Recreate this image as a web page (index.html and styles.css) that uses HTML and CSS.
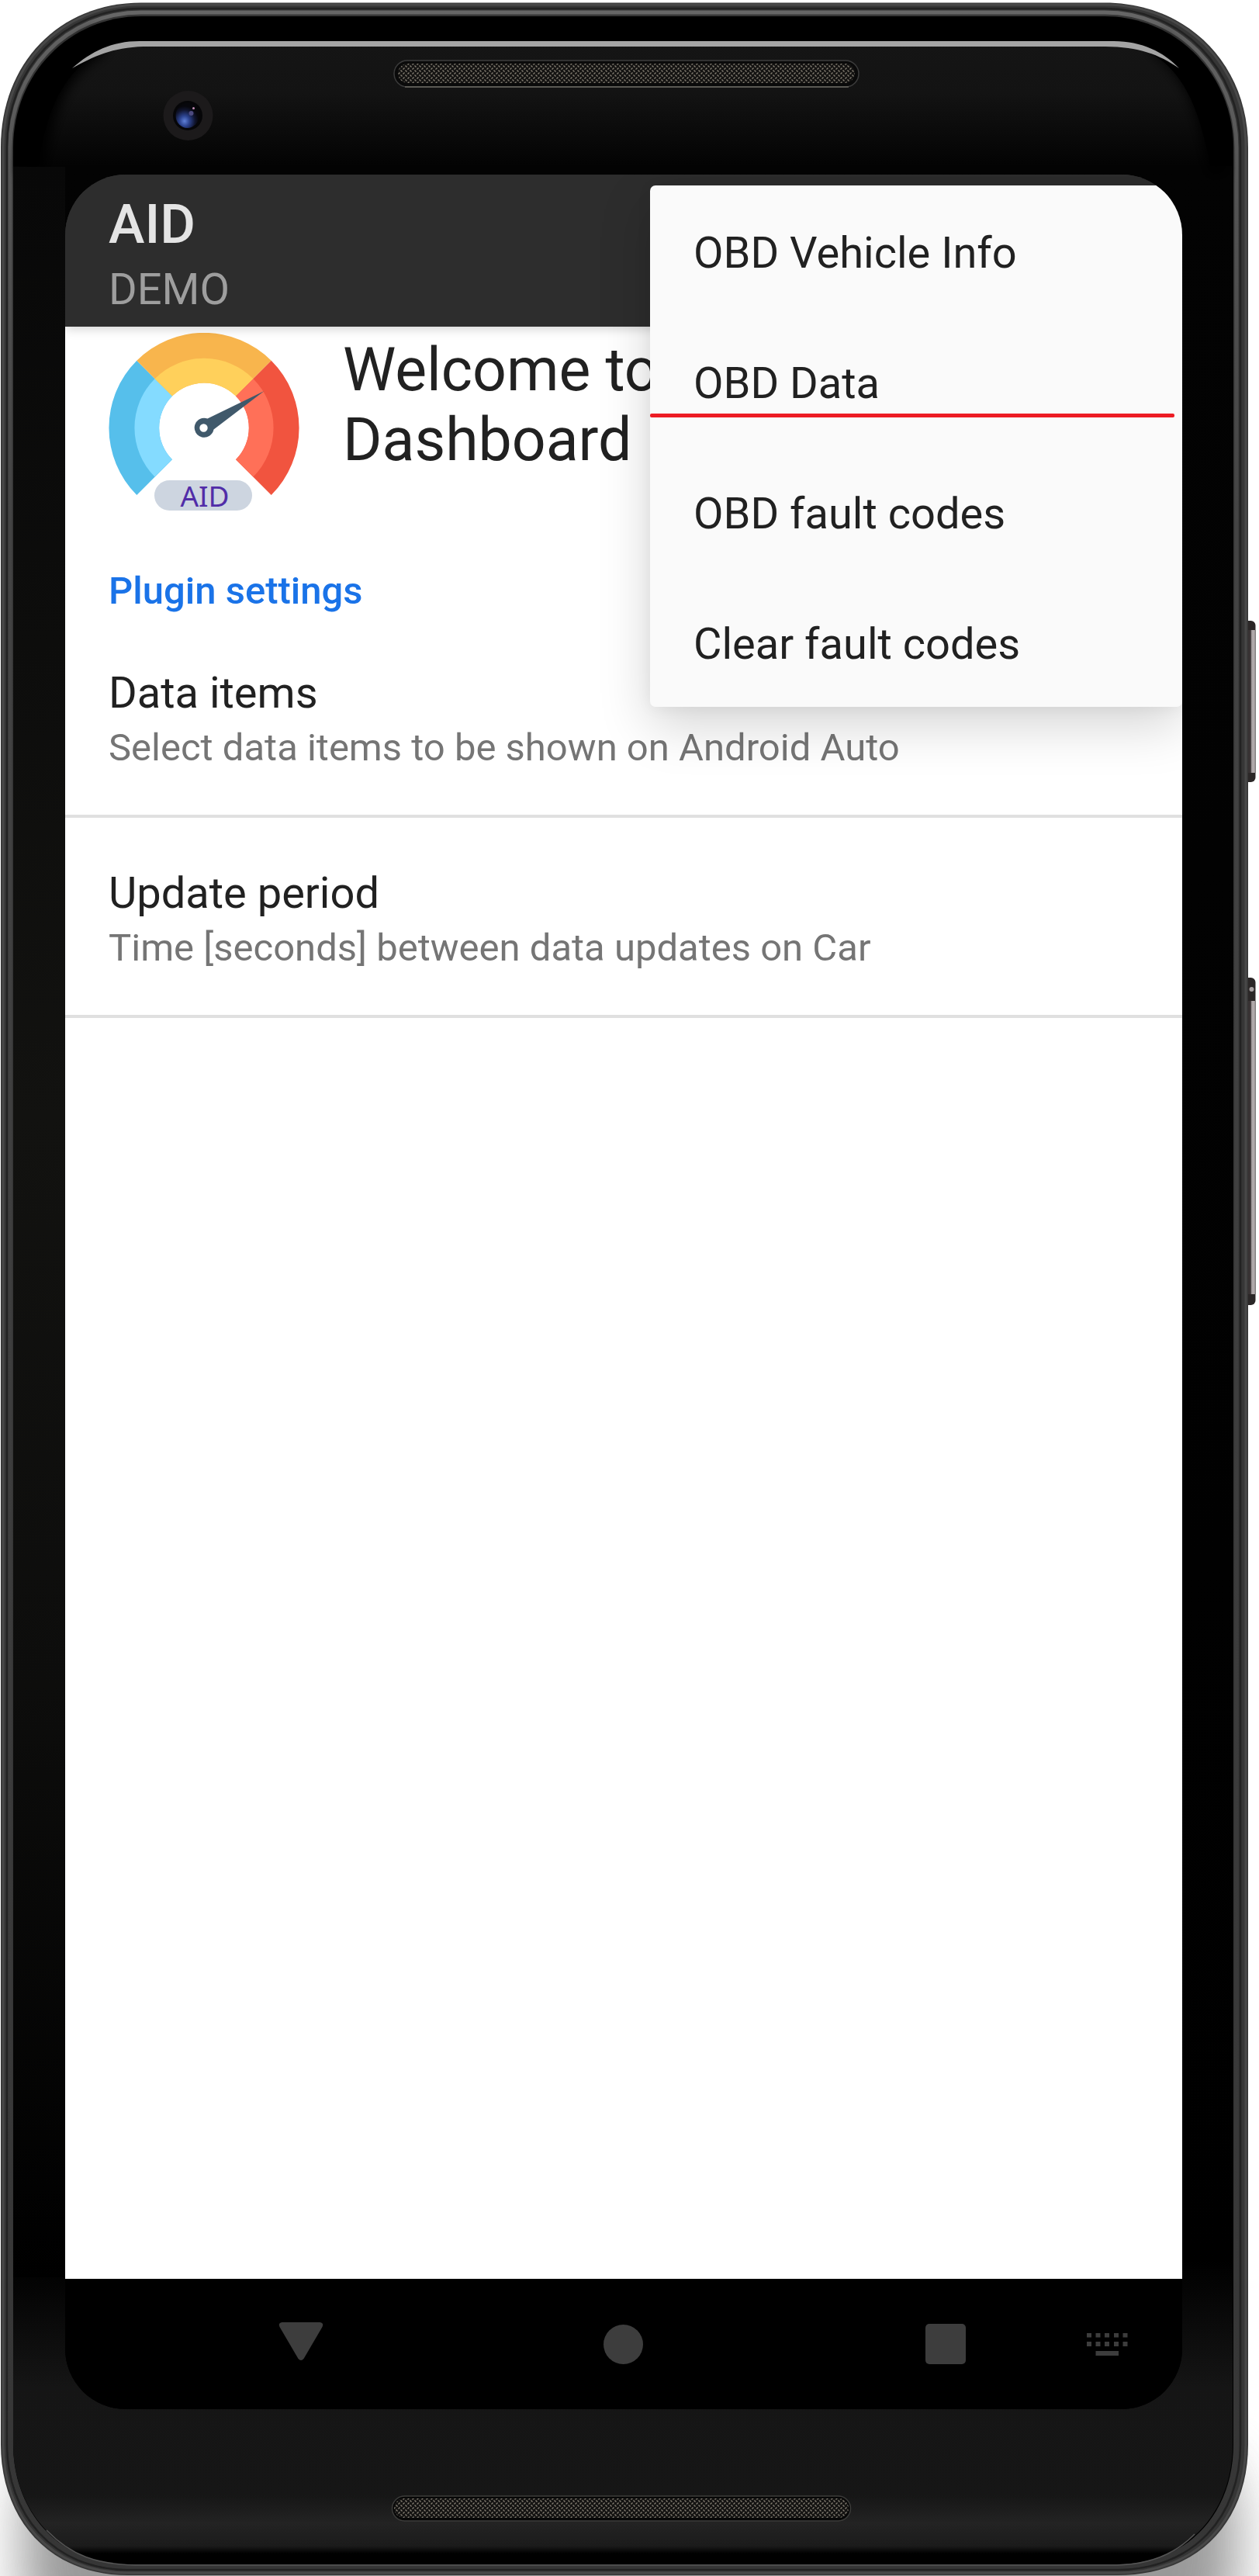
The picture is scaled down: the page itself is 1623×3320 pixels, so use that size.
FILE: index.html
```
<!DOCTYPE html>
<html lang="en">
<head>
<meta charset="utf-8">
<title>AID</title>
<link rel="stylesheet" href="styles.css">
</head>
<body>
<div class="stage">
  <svg class="device" width="1623" height="3320" viewBox="0 0 1623 3320" aria-hidden="true">
    <defs>
      <filter id="soft" x="-20%" y="-50%" width="140%" height="200%"><feGaussianBlur stdDeviation="34"/></filter>
      <filter id="blur8" x="-30%" y="-30%" width="160%" height="160%"><feGaussianBlur stdDeviation="8"/></filter>
      <linearGradient id="face" x1="0" y1="0" x2="0" y2="1">
        <stop offset="0" stop-color="#151515"/>
        <stop offset="0.02" stop-color="#131313"/>
        <stop offset="0.049" stop-color="#030303"/>
        <stop offset="0.88" stop-color="#000"/>
        <stop offset="0.93" stop-color="#151515"/>
        <stop offset="0.973" stop-color="#161616"/>
        <stop offset="0.984" stop-color="#232323"/>
        <stop offset="0.993" stop-color="#1b1b1b"/>
        <stop offset="0.996" stop-color="#000"/>
        <stop offset="1" stop-color="#000"/>
      </linearGradient>
      <linearGradient id="leftEdge" x1="0" y1="0" x2="0" y2="1">
        <stop offset="0" stop-color="#080808"/>
        <stop offset="0.45" stop-color="#121210"/>
        <stop offset="0.72" stop-color="#0d0d0c"/>
        <stop offset="1" stop-color="#000"/>
      </linearGradient>
      <linearGradient id="rim" x1="0" y1="0" x2="0" y2="1">
        <stop offset="0" stop-color="#666"/>
        <stop offset="0.06" stop-color="#555"/>
        <stop offset="0.2" stop-color="#444"/>
        <stop offset="1" stop-color="#363636"/>
      </linearGradient>
      <linearGradient id="key" x1="0" y1="0" x2="1" y2="0">
        <stop offset="0" stop-color="#2b2828"/>
        <stop offset="0.66" stop-color="#3b3536"/>
        <stop offset="0.74" stop-color="#aaa3a4"/>
        <stop offset="0.92" stop-color="#b4adae"/>
        <stop offset="1" stop-color="#6c6667"/>
      </linearGradient>
      <radialGradient id="lens" cx="0.38" cy="0.72" r="0.6">
        <stop offset="0" stop-color="#5f80d8"/>
        <stop offset="0.35" stop-color="#2c438f"/>
        <stop offset="0.75" stop-color="#10142d"/>
        <stop offset="1" stop-color="#07070c"/>
      </radialGradient>
      <pattern id="mesh" width="6" height="6" patternUnits="userSpaceOnUse">
        <rect width="6" height="6" fill="#141312"/>
        <path d="M0.5 0.5l2 2M3.5 5.5l2-2" stroke="#857f73" stroke-width="1.400"/>
      </pattern>
    </defs>
    <rect x="30" y="3150" width="1563" height="260" rx="90" fill="#777" opacity="0.75" filter="url(#soft)"/>
    <rect x="1600" y="800" width="18.500" height="208" rx="6" fill="#2b2727"/>
    <rect x="1600" y="812" width="18.500" height="184" fill="url(#key)"/>
    <rect x="1600" y="1260" width="18.500" height="422" rx="6" fill="#2b2727"/>
    <rect x="1600" y="1290" width="18.500" height="378" fill="url(#key)"/>
    <circle cx="1613.500" cy="1275" r="3" fill="#a8a1a2"/>
    <path d="M182 3.500H1424C1530 3.500 1609 82 1609 190V3150C1609 3250 1545 3319 1440 3319H165C62 3319 1 3245 1 3150V190C1 82 76 3.500 182 3.500Z" fill="#363636"/>
    <path d="M182 6H1424C1528 6 1606 84 1606 190V3150C1606 3248 1543 3316 1440 3316H165C64 3316 4 3243 4 3150V190C4 84 78 6 182 6Z" fill="none" stroke="#484848" stroke-width="3"/>
    <path d="M182 11H1424C1522 11 1599 88 1599 190V3150C1599 3244 1538 3312 1440 3312H165C68 3312 9 3240 9 3150V190C9 88 82 11 182 11Z" fill="none" stroke="#222" stroke-width="2.500"/>
    <path d="M182 16H1424C1518 16 1594 92 1594 190V3150C1594 3242 1534 3308 1440 3308H165C72 3308 13 3238 13 3150V190C13 92 86 16 182 16Z" fill="none" stroke="url(#rim)" stroke-width="5"/>
    <path d="M182 21H1424C1515 21 1590 95 1590 190V3150C1590 3240 1530 3305 1440 3305H165C75 3305 17 3236 17 3150V190C17 95 90 21 182 21Z" fill="#000"/>
    <path d="M182 55H1424C1496 57 1539 95 1560 214H1589V3150C1589 3239 1529 3304 1440 3304H165C76 3304 17 3235 17 3150V214H50C64 100 115 58 182 55Z" fill="url(#face)"/>
    <path d="M40 225C48 130 80 78 130 52" fill="none" stroke="#000" stroke-width="34" filter="url(#blur8)"/>
    <path d="M1569 225C1561 130 1535 88 1490 52" fill="none" stroke="#000" stroke-width="26" filter="url(#blur8)"/>
    <rect x="17" y="215" width="67" height="2720" fill="url(#leftEdge)"/>
    <path d="M93 88C118 66 144 53 180 53H1436C1472 53 1500 67 1520 88C1494 70 1468 60.500 1425 60H185C145 61 120 73 93 88Z" fill="#a4a4a4"/>
    <path d="M60 3261C92 3294 125 3305 175 3306H1440C1482 3305 1515 3292 1540 3266" fill="none" stroke="#555" stroke-width="1.500"/>
    <rect x="508" y="78" width="599" height="34" rx="17" fill="#0a0a0a" stroke="#3c3c3c" stroke-width="1.500"/>
    <path d="M522 112H1094" stroke="#6a6761" stroke-width="1.500"/>
    <rect x="513" y="82" width="589" height="25" rx="12.500" fill="url(#mesh)"/>
    <rect x="505.500" y="3217" width="591" height="32" rx="16" fill="#070707" stroke="#3c3c3a" stroke-width="1.500"/>
    <rect x="508" y="3220" width="586" height="25" rx="12.500" fill="url(#mesh)"/>
    <circle cx="242.500" cy="149" r="32" fill="#1c1a1b"/>
    <circle cx="242" cy="149" r="19" fill="#060608"/>
    <ellipse cx="241.500" cy="149" rx="15" ry="16" fill="url(#lens)"/>
    <circle cx="246.500" cy="146" r="3" fill="#4d4a80"/>
    <circle cx="249.500" cy="139.500" r="1.500" fill="#c48fb6"/>
  </svg>

  <main class="screen">
    <header class="appbar">
      <h1 class="appbar-title">AID</h1>
      <div class="appbar-subtitle">DEMO</div>
    </header>

    <section class="content">
      <div class="welcome">
        <svg class="logo" width="246" height="246" viewBox="0 0 246 246" role="img" aria-label="AID">
          <path d="M36.300 209A122.500 122.500 0 0 1 36.300 35.800L82 81.500A58 58 0 0 0 82 163.300Z" fill="#56bfeb"/>
          <path d="M36.300 35.800A122.500 122.500 0 0 1 209.700 35.800L164 81.500A58 58 0 0 0 82 81.500Z" fill="#f8b54d"/>
          <path d="M209.700 35.800A122.500 122.500 0 0 1 209.700 209L164 163.300A58 58 0 0 0 164 81.500Z" fill="#f1543f"/>
          <path d="M59.500 185.500A89.500 89.500 0 0 1 59.500 59.200L82 81.500A58 58 0 0 0 82 163.300Z" fill="#84dbff"/>
          <path d="M59.500 59.200A89.500 89.500 0 0 1 186.500 59.200L164 81.500A58 58 0 0 0 82 81.500Z" fill="#ffd05b"/>
          <path d="M186.500 59.200A89.500 89.500 0 0 1 186.500 185.500L164 163.300A58 58 0 0 0 164 81.500Z" fill="#ff7058"/>
          <path fill-rule="evenodd" d="M200.500 75L127.500 110.500A12.500 12.500 0 1 0 135.500 124.500ZM122.500 117.300a5.200 5.200 0 1 1 0 10.400a5.200 5.200 0 1 1 0-10.400Z" fill="#40596b"/>
          <rect x="59" y="190" width="126" height="39" rx="19.500" fill="#cdd5e0"/>
          <text class="logo-text" x="124" y="224" text-anchor="middle">AID</text>
        </svg>
        <h2 class="welcome-title">Welcome to<br>Dashboard</h2>
      </div>

      <h3 class="category">Plugin settings</h3>
      <div class="preference">
        <div class="preference-title">Data items</div>
        <div class="preference-summary">Select data items to be shown on Android Auto</div>
      </div>
      <div class="preference">
        <div class="preference-title">Update period</div>
        <div class="preference-summary">Time [seconds] between data updates on Car</div>
      </div>
    </section>

    <nav class="navbar">
      <svg width="1440" height="168" viewBox="0 0 1440 168" fill="#3d3d3d" aria-hidden="true">
        <path d="M279.500 56H328.500Q334 57 331.500 62L307.500 103Q304 107 300.500 103L276.500 62Q274 57 279.500 56Z"/>
        <circle cx="719.500" cy="84.500" r="25.500"/>
        <rect x="1109" y="58" width="52" height="52" rx="5"/>
        <path d="M1317 70h6v5.500h-6zM1328.500 70h6v5.500h-6zM1340 70h6v5.500h-6zM1352 70h6v5.500h-6zM1363.500 70h6v5.500h-6zM1317 81h6v6h-6zM1328.500 81h6v6h-6zM1340 81h6v6h-6zM1352 81h6v6h-6zM1363.500 81h6v6h-6zM1328.500 93h29.500v6h-29.500z"/>
      </svg>
    </nav>

    <div class="menu" role="menu">
      <div class="menu-item" role="menuitem">OBD Vehicle Info</div>
      <div class="menu-item marked" role="menuitem">OBD Data</div>
      <div class="menu-item" role="menuitem">OBD fault codes</div>
      <div class="menu-item" role="menuitem">Clear fault codes</div>
    </div>
  </main>
</div>
</body>
</html>
```
FILE: styles.css
```
* {
  box-sizing: border-box;
}

body {
  margin: 0;
  background: #fff;
  font-family: Roboto, sans-serif;
  color: #212121;
}

.stage {
  position: relative;
  width: 1623px;
  height: 3320px;
  padding: 225px 99px 215px 84px;
  overflow: hidden;
}

.device {
  position: absolute;
  inset: 0;
}

.screen {
  position: relative;
  display: flex;
  flex-direction: column;
  width: 1440px;
  height: 2880px;
  overflow: hidden;
  border-radius: 78px;
  background: linear-gradient(#2d2d2d 0 190px, #fff 190px 2712px, #000 2712px);
}

.appbar {
  position: relative;
  flex: none;
  height: 196px;
  padding: 23px 56px 0;
  background: #2d2d2d;
  box-shadow: 0 2px 14px rgba(0, 0, 0, 0.2);
}

.appbar-title {
  margin: 0;
  font-size: 70px;
  line-height: 82px;
  font-weight: 500;
  color: #e4e4e4;
}

.appbar-subtitle {
  margin-top: 10px;
  font-size: 56px;
  line-height: 66px;
  color: #9e9e9e;
}

.content {
  flex: 1;
}

.welcome {
  display: flex;
  gap: 56px;
  height: 304px;
  padding: 8px 56px 0;
}

.logo {
  flex: none;
}

.logo-text {
  font-family: "Noto Sans", "DejaVu Sans", sans-serif;
  font-size: 37px;
  fill: #512da8;
}

.welcome-title {
  margin: 3px 0 0;
  font-size: 77px;
  line-height: 90px;
  font-weight: 400;
  white-space: nowrap;
}

.category {
  margin: 0;
  padding: 8px 56px 6px;
  font-size: 49px;
  line-height: 57px;
  font-weight: 500;
  color: #1a73e8;
}

.preference {
  height: 258px;
  padding: 64px 56px 0;
  border-bottom: 4px solid #e0e0e0;
}

.preference-title {
  font-size: 56px;
  line-height: 66px;
}

.preference-summary {
  margin-top: 9px;
  font-size: 49px;
  line-height: 57px;
  color: #757575;
}

.navbar {
  flex: none;
  height: 168px;
  background: #000;
}

.navbar svg {
  display: block;
}

.menu {
  position: absolute;
  top: 14px;
  right: 0;
  width: 686px;
  height: 672px;
  border-radius: 7px;
  background: #fafafa;
  box-shadow: 0 24px 66px rgba(0, 0, 0, 0.17), 0 2px 20px rgba(0, 0, 0, 0.05);
}

.menu-item {
  height: 168px;
  padding-left: 56px;
  font-size: 56px;
  line-height: 174px;
}

.marked {
  position: relative;
}

.marked::after {
  content: "";
  position: absolute;
  left: 0;
  right: 10px;
  bottom: 37px;
  height: 5px;
  border-radius: 2px;
  background: #ed1c24;
}
```
